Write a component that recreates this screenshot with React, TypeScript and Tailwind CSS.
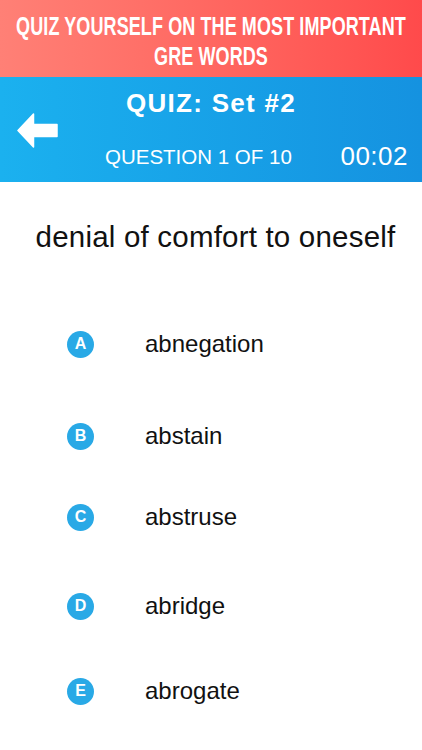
import React from "react";

const options = [
  { letter: "A", word: "abnegation", mt: "mt-0" },
  { letter: "B", word: "abstain", mt: "mt-[48px]" },
  { letter: "C", word: "abstruse", mt: "mt-[37px]" },
  { letter: "D", word: "abridge", mt: "mt-[45px]" },
  { letter: "E", word: "abrogate", mt: "mt-[41px]" },
];

export default function App() {
  return (
    <div className="w-[422px] h-[750px] bg-white overflow-hidden font-['Liberation_Sans',Arial,sans-serif]">
      {/* Red promo banner */}
      <div className="h-[77px] bg-gradient-to-r from-[#ff8076] to-[#ff4a4b] pt-[12px] flex flex-col items-center text-white font-bold">
        <div className="h-[30px] flex items-center justify-center">
          <span className="inline-block text-[18px] leading-[18px] scale-y-[1.4] tracking-[0.1px] whitespace-nowrap">
            QUIZ YOURSELF ON THE MOST IMPORTANT
          </span>
        </div>
        <div className="h-[30px] flex items-center justify-center">
          <span className="inline-block text-[18px] leading-[18px] scale-y-[1.4] tracking-[0.1px] whitespace-nowrap">
            GRE WORDS
          </span>
        </div>
      </div>

      {/* Blue header */}
      <div className="h-[105px] bg-gradient-to-r from-[#1bb1ef] to-[#1592e0] pt-[11px] text-white grid grid-cols-[105px_1fr_105px] grid-rows-[30px_30px] gap-y-[23px]">
        <div className="row-span-2 flex items-center pl-[17px] pt-[2px]">
          <svg width="41" height="35" viewBox="0 0 41 35">
            <path
              d="M1 17.5 L16.5 1 L16.5 11.5 L40 11.5 L40 23.5 L16.5 23.5 L16.5 34 Z"
              fill="white"
              stroke="white"
              strokeWidth="1.5"
              strokeLinejoin="round"
            />
          </svg>
        </div>
        <div className="col-start-2 row-start-1 flex items-center justify-center text-[26px] leading-[30px] font-bold tracking-[1.3px] whitespace-nowrap">
          QUIZ: Set #2
        </div>
        <div className="col-start-2 row-start-2 flex items-center text-[20.5px] leading-[30px] whitespace-nowrap pt-[2px]">
          QUESTION 1 OF 10
        </div>
        <div className="col-start-3 row-start-2 flex items-center justify-end pr-[14px] text-[26px] leading-[30px] whitespace-nowrap tracking-[0.5px]">
          00:02
        </div>
      </div>

      {/* Question */}
      <div className="mt-[37px] h-[36px] pl-[9px] flex items-center justify-center text-[29.5px] leading-[36px] text-[#111] whitespace-nowrap tracking-[0.2px]">
        denial of comfort to oneself
      </div>

      {/* Options */}
      <div className="mt-[67px] flex flex-col">
        {options.map((o) => (
          <div key={o.letter} className={`${o.mt} h-[44px] flex items-center pl-[67px]`}>
            <div className="w-[27px] h-[27px] rounded-full bg-[#29a9e6] flex items-center justify-center text-white text-[16px] font-bold leading-none">
              {o.letter}
            </div>
            <div className="ml-[51px] text-[24px] leading-[30px] text-[#111]">{o.word}</div>
          </div>
        ))}
      </div>
    </div>
  );
}
